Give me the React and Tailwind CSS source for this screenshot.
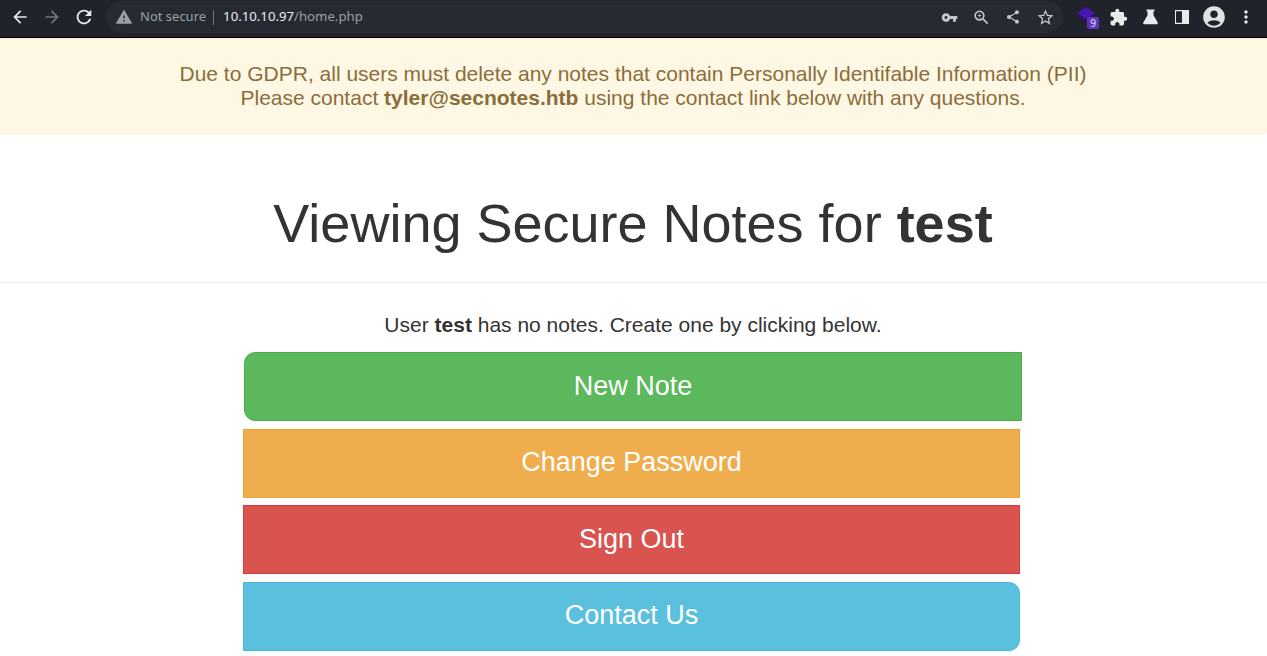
import React from "react";
import { MdArrowBack, MdArrowForward, MdRefresh, MdWarning, MdVpnKey, MdZoomIn, MdShare, MdStarBorder, MdExtension, MdAccountCircle, MdMoreVert } from "react-icons/md";

function Flask() {
  return (
    <svg width="15" height="16" viewBox="0 0 15 16" fill="#e8eaed">
      <path d="M3.500.5h8v1.800h-1v3.900l4.200 7.200c.5.9 0 1.800-.9 1.800H1.200c-.9 0-1.400-.9-.9-1.800L4.500 6.200V2.300h-1z" />
    </svg>
  );
}
function Panel() {
  return (
    <svg width="14" height="14" viewBox="0 0 14 14">
      <path fill="#e8eaed" fillRule="evenodd" d="M0 0h14v14H0zM1 1.200v11.600h6V1.200z" />
    </svg>
  );
}
function Layers() {
  return (
    <div className="relative w-[32px] h-[24px]">
      <svg width="18" height="16" viewBox="0 0 18 16" className="absolute left-[7px] top-[2px]">
        <path fill="#2a1470" d="M0 9l9-5.500L18 9l-9 6z" />
        <path fill="#4a14b0" d="M0 6l9-6 9 6-9 6z" />
      </svg>
      <div className="absolute left-[17px] top-[12px] w-[12px] h-[12px] rounded-[2px] bg-[#5f35b8] text-[#e8e0ff] text-[10px] leading-[12px] text-center" style={{fontFamily:'"Noto Sans", sans-serif'}}>9</div>
    </div>
  );
}
function Slot({ children }) {
  return <div className="w-[32px] flex items-center justify-center shrink-0">{children}</div>;
}
function Btn({ children, cls }) {
  return (
    <button className={`block h-[69px] border text-white text-[27px] leading-[65px] text-center ${cls}`}>{children}</button>
  );
}

export default function App() {
  return (
    <div className="h-[656px] overflow-hidden bg-white text-[#333] font-['Liberation_Sans',Arial,sans-serif]">
      <div className="h-[38px] bg-[#20232b] border-b border-black flex items-center pb-[3px] font-['Noto_Sans',sans-serif]">
        <div className="flex items-center pl-[10px] gap-[12px] text-[#e8eaed]">
          <MdArrowBack size={20} />
          <MdArrowForward size={20} className="text-[#73757a]" />
          <MdRefresh size={22} className="-ml-[1px]" />
        </div>
        <div className="ml-[11px] w-[957px] shrink-0 h-[32px] rounded-full bg-[#272a33] flex items-center pl-[9px]">
          <MdWarning size={18} className="text-[#9aa0a6]" />
          <span className="ml-[7px] text-[13px] text-[#9aa0a6]">Not secure</span>
          <span className="ml-[7px] w-px h-[15px] bg-[#73757a]" />
          <span className="ml-[9px] text-[13.200px] text-[#e8eaed]">10.10.10.97<span className="text-[#9aa0a6]">/home.php</span></span>
          <div className="ml-auto flex items-center text-[#c4c7cc] pr-[2px]">
            <Slot><MdVpnKey size={17} /></Slot>
            <Slot><MdZoomIn size={19} /></Slot>
            <Slot><MdShare size={16} /></Slot>
            <Slot><MdStarBorder size={19} /></Slot>
          </div>
        </div>
        <div className="ml-[7px] h-[32px] flex items-center text-[#e8eaed] shrink-0">
          <Layers />
          <Slot><MdExtension size={19} /></Slot>
          <Slot><Flask /></Slot>
          <Slot><Panel /></Slot>
          <Slot><MdAccountCircle size={26} className="text-[#dfe1e5]" /></Slot>
          <Slot><MdMoreVert size={20} /></Slot>
        </div>
      </div>

      <div className="h-[96px] bg-[#fef7e3] border-y border-[#faebcc] rounded-b-[4px] pt-[23px] pr-px text-center text-[#8a6d3b] text-[21px] leading-[24px]">
        <div>Due to GDPR, all users must delete any notes that contain Personally Identifable Information (PII)</div>
        <div>Please contact <b>tyler@secnotes.htb</b> using the contact link below with any questions.</div>
      </div>

      <div className="h-[149px] border-b border-[#eee] pt-[56px] pr-px text-center text-[54px] leading-[66px]">
        Viewing Secure Notes for <b>test</b>
      </div>

      <div className="pt-[30px] pr-px text-center text-[21px] leading-[24px] text-[#333]">
        User <b>test</b> has no notes. Create one by clicking below.
      </div>

      <div className="ml-[243px] w-[777px] mt-[15px]">
        <Btn cls="ml-px w-[778px] bg-[#5cb85c] border-[#4cae4c] rounded-l-[11px]">New Note</Btn>
        <Btn cls="w-[777px] mt-[8px] pb-[2px] bg-[#f0ad4e] border-[#eea236]">Change Password</Btn>
        <Btn cls="w-[777px] mt-[7px] bg-[#d9534f] border-[#d43f3a]">Sign Out</Btn>
        <Btn cls="w-[777px] mt-[8px] pb-[2px] bg-[#5bc0de] border-[#46b8da] rounded-r-[11px]">Contact Us</Btn>
      </div>
    </div>
  );
}
